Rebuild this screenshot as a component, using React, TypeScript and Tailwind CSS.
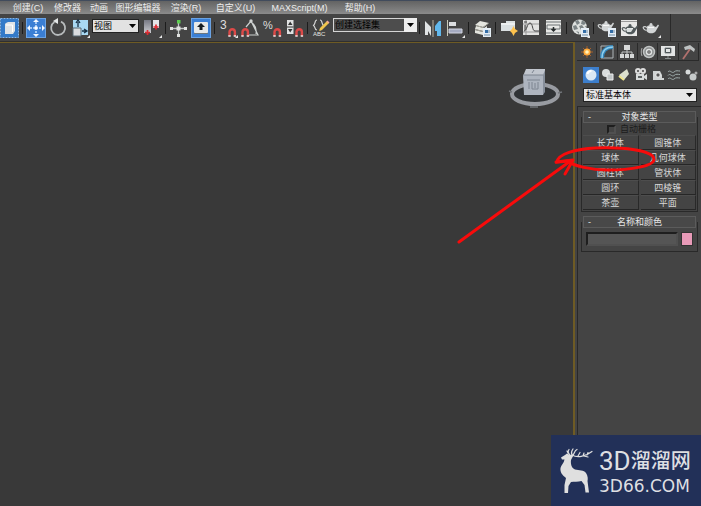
import type { ReactNode } from 'react'

const menus = [
  { label: '创建(C)', width: 'w-10' },
  { label: '修改器', width: 'w-[39px]' },
  { label: '动画', width: 'w-6' },
  { label: '图形编辑器', width: 'w-[54px]' },
  { label: '渲染(R)', width: 'w-[42px]' },
  { label: '自定义(U)', width: 'w-[57px]' },
  { label: 'MAXScript(M)', width: 'w-[71px]' },
  { label: '帮助(H)', width: 'w-[50px]' },
]

const primitives = ['长方体', '圆锥体', '球体', '几何球体', '圆柱体', '管状体', '圆环', '四棱锥', '茶壶', '平面']

function Tool({ label, wide = true, children }: { label: string; wide?: boolean; children: ReactNode }) {
  return (
    <button type="button" aria-label={label} className={wide ? 'w-[22px] shrink-0' : 'w-5 shrink-0'}>
      <svg viewBox={wide ? '0 0 22 24' : '1 0 20 24'} className="block h-6 w-full" fill="none">
        {children}
      </svg>
    </button>
  )
}

function Sep() {
  return (
    <span className="flex w-[5px] shrink-0 justify-center" aria-hidden>
      <span className="h-3 w-px bg-[#1c1c1c]" />
    </span>
  )
}

function Active() {
  return <rect x="1.5" y="2.5" width="19" height="19" fill="#3b7fd4" stroke="#6ba3e4" />
}

function Flyout() {
  return <path d="M21 19v3h-3z" fill="#e8e8e8" />
}

function Magnet({ x = 12, y = 12 }: { x?: number; y?: number }) {
  return (
    <g transform={`translate(${x} ${y})`}>
      <path d="M1.500 8V4a2.700 2.700 0 0 1 5.400 0v4" stroke="#dc4a48" strokeWidth="2.400" />
      <path d="M.3 8h2.400M5.700 8h2.400" stroke="#f1e5e5" strokeWidth="1.600" />
    </g>
  )
}

function Teapot({ x = 0, y = 0, fill = '#d2d5d6' }: { x?: number; y?: number; fill?: string }) {
  return (
    <g transform={`translate(${x} ${y})`}>
      <path d="M5 5.500C7 3.500 11 3.500 12.500 5.500L14 6L16 3.500L17 4.500L13.500 10.500C12 13 6 13 4.500 10Z" fill={fill} />
      <path d="M4.500 9.500C1 8.500 0 5.500 3 5.500L5 6.500" stroke={fill} strokeWidth="1.200" />
      <path d="M7.500 3.500h3M9 2v2" stroke={fill} strokeWidth="1.500" />
      <path d="M6 6.500h6" stroke="#f6f6f6" />
    </g>
  )
}

function Doc() {
  return (
    <g>
      <path d="M12 12h8v9h-8z" fill="#e4edf5" />
      <path d="M14 14h3v3h-3z" fill="#336da6" />
      <path d="M13 19h6M18 14v3" stroke="#718da6" />
    </g>
  )
}

function Caret() {
  return (
    <svg viewBox="0 0 7 4" className="h-1 w-[7px]" aria-hidden>
      <path d="M0 0h7L3.500 4z" fill="#050505" />
    </svg>
  )
}

function Toolbar() {
  return (
    <div className="flex h-7 items-center border-b border-[#303030] bg-[#444444]">
      <Tool label="选择对象" wide={false}>
        <rect x="1.500" y="2.500" width="18" height="19" fill="#337ac9" stroke="#83b6ed" strokeDasharray="2 1" />
        <path d="M7 7l2-1h7v9l-2 3H6V8z" fill="#dfe3e6" />
        <path d="M7 9h6.500v7" stroke="#fff" />
      </Tool>
      <Sep />
      <Tool label="选择并移动">
        <Active />
        <path d="M11 6v12M5 12h12" stroke="#c4e1ff" strokeDasharray="2 1" strokeWidth="1.500" />
        <path d="M11 3L8 6h6zM11 21l-3-3h6zM2 12l3-3v6zM20 12l-3-3v6z" fill="#f3f8ff" />
        <path d="M9.500 10.500h3v3h-3z" fill="#fff" />
      </Tool>
      <Tool label="选择并旋转">
        <path d="M7.500 6A7 7 0 1 0 14 5.600" stroke="#b7bbbc" strokeWidth="1.800" />
        <path d="M6 5l5-3v6z" fill="#e4e7e7" />
      </Tool>
      <Tool label="选择并缩放">
        <path d="M4 4h15v15H4z" fill="#a8d8f2" />
        <path d="M4 12h8v8H4z" fill="#d9dcdf" stroke="#586a75" />
        <path d="M9 11V6M7 7l2-3 2 3M13 15h4M15 13l3 2-3 2" stroke="#173044" strokeWidth="1.300" />
        <Flyout />
      </Tool>
      <label className="relative ml-px mr-0.5 flex w-[47px] shrink-0 self-start pt-[5px]">
        <select aria-label="参考坐标系" className="h-[14px] w-full appearance-none border border-[#222] bg-[#e2e2e2] pl-px text-[9px] leading-3 text-black">
          <option>视图</option>
        </select>
        <span className="pointer-events-none absolute inset-y-0 right-[3px] flex items-center pt-[5px]">
          <Caret />
        </span>
      </label>
      <Tool label="使用轴点中心">
        <path d="M3 4h7v13H3z" fill="url(#pivot)" />
        <path d="M12 4h6v8h-6z" fill="#e6e6e8" />
        <path d="M6.500 14v5M4 16.500h5M15 8.500v5M12.500 11h5" stroke="#e02b31" strokeWidth="1.700" />
        <Flyout />
        <defs>
          <linearGradient id="pivot" x2="0" y2="1">
            <stop stopColor="#777984" />
            <stop offset="1" stopColor="#cacbd0" />
          </linearGradient>
        </defs>
      </Tool>
      <Sep />
      <Tool label="选择并操纵">
        <path d="M10.500 6v13M3 12.500h15" stroke="#c4c8c7" strokeWidth="1.300" />
        <path d="M8.500 10.500h4v4h-4zM2 11h3v3H2zM16 11h3v3h-3zM9 18h3v3H9z" fill="#e0e1df" />
        <path d="M9 4h3.500v3.500H9z" fill="#5ece50" />
      </Tool>
      <Tool label="键盘快捷键覆盖">
        <Active />
        <rect x="4" y="6" width="14" height="11" rx="1" fill="#e7e9e9" />
        <path d="M4 17.500h14" stroke="#6b7780" />
        <path d="M11 7l-4 4h2.500v3h3v-3H15z" fill="#171d22" />
      </Tool>
      <Sep />
      <Tool label="捕捉开关">
        <text x="3" y="13" fontSize="12" fill="#dedede">3</text>
        <Magnet x={11} />
        <Flyout />
      </Tool>
      <Tool label="角度捕捉切换">
        <path d="M7 11L12 5l7 14H9M12 6a12 12 0 0 1 5 12" stroke="#cdd1d0" strokeWidth="1.200" />
        <circle cx="12" cy="5" r="1.700" fill="#d2d5d4" />
        <Magnet x={2} />
      </Tool>
      <Tool label="百分比捕捉切换">
        <text x="2" y="13" fontSize="11" fill="#dedede">%</text>
        <Magnet />
      </Tool>
      <Tool label="微调器捕捉切换">
        <path d="M4 4h6.500v14H4z" fill="#e0e2e2" />
        <path d="M4 11h6.500" stroke="#333" />
        <path d="M5 9h4.500L7.200 5.500zM5 13h4.500l-2.300 3.500z" fill="#353535" />
        <Magnet />
      </Tool>
      <Sep />
      <Tool label="编辑命名选择集">
        <path d="M7 4C4 4 6 9 3 9.500 6 10 4 14 7 14M10 4c3 0 1 5 4 5.500C11 10 13 14 10 14" stroke="#d5d5d5" strokeWidth="1.200" />
        <path d="M10 12l7-7 2 2-7 7-3 1z" fill="#efc44c" />
        <path d="M17 5l2 2" stroke="#f5a49c" strokeWidth="1.500" />
        <text x="3" y="20" fontSize="6" fill="#e5e5e5">ABC</text>
      </Tool>
      <label className="relative ml-px flex w-[84px] shrink-0 self-start pt-1">
        <select aria-label="命名选择集" className="h-[14px] w-full appearance-none border border-[#d5d5d5] bg-[#4d4d4d] pl-px text-[9px] leading-3 text-black">
          <option>创建选择集</option>
        </select>
        <span className="pointer-events-none absolute bottom-0 right-0 flex h-[14px] w-[13px] items-center justify-center bg-[#eeeeee]">
          <Caret />
        </span>
      </label>
      <Sep />
      <Tool label="镜像">
        <path d="M3 5l6 6v9l-3-5v4H3z" fill="#e1e4e5" />
        <path d="M19 5h-2l-4 5v5h2v5h4z" fill="#62b8ec" />
        <path d="M11 4v17" stroke="#b6afa0" />
      </Tool>
      <Tool label="对齐">
        <path d="M3.500 4v16" stroke="#c8c9ba" />
        <path d="M5 6h7v4H5z" fill="#dbdde0" />
        <path d="M5 13h13v4H5z" fill="#a5abc1" stroke="#d2d5e0" />
        <Flyout />
      </Tool>
      <Sep />
      <Tool label="层管理器">
        <path d="M9 5l9 2-6 4-8-2zM5 10l8 2 3-2v2l-4 3-8-2zM4 14l8 2v3l-8-2z" fill="#e4e5df" />
        <path d="M5 9.500l7 2 5-4M4 13.500l8 2" stroke="#aaa99f" />
        <Doc />
      </Tool>
      <Sep />
      <Tool label="切换功能区">
        <path d="M3 7h5V5h9v10H3z" fill="#d9dfe1" />
        <path d="M3 8h14" stroke="#fff" />
        <path d="M15.500 10l1.500 3 3 2-3 2-1.500 3-1.500-3-2-2 2-2z" fill="#ffc34d" />
      </Tool>
      <Tool label="曲线编辑器">
        <path d="M3 4h16v15H3z" fill="#e2e2e1" />
        <path d="M6 4v15M3 8h16M3 16h16" stroke="#999" />
        <path d="M4 15c3 0 3-8 6-8s2 8 5 8h4" stroke="#444" />
        <path d="M4 6h3M5 9v5" stroke="#3b3b3b" />
      </Tool>
      <Tool label="图解视图">
        <path d="M4 4h15v15H4z" fill="#e7e8e6" />
        <path d="M4 6h15M5 9h13v4H5zM4 17h15" stroke="#6b7172" />
        <path d="M11.500 11v4M9.500 13l2 2 2-2" stroke="#252a2b" strokeWidth="1.500" />
      </Tool>
      <Sep />
      <Tool label="材质编辑器">
        <circle cx="10.500" cy="11" r="7.500" fill="#dde0de" />
        <path d="M6 5l3-1 2 3-3 2zM13 4l4 3-2 2-3-1zM4 10l3-1 2 4-4 1zM10 10l3-1 2 3-3 2zM7 15l3 1v2zM16 10h2v3z" fill="#7b8385" />
        <Doc />
        <Flyout />
      </Tool>
      <Sep />
      <Tool label="渲染设置">
        <Teapot x={1} y={3} />
        <Doc />
      </Tool>
      <Tool label="渲染帧窗口">
        <path d="M3 4h16v16H3z" fill="#e8e8e7" />
        <path d="M3 5.500h16" stroke="#999" />
        <Teapot x={3} y={6} fill="#51595b" />
        <path d="M8 13c2-1 5-1 7 0l-2 3H9z" fill="#d8dddd" />
      </Tool>
      <Tool label="渲染产品">
        <Teapot x={2} y={5} />
        <Flyout />
      </Tool>
      <span className="ml-2 h-full w-px bg-[#292929]" aria-hidden />
    </div>
  )
}

function PanelIcon({ label, active, tab, children }: { label: string; active?: boolean; tab?: boolean; children: ReactNode }) {
  return (
    <button
      type="button"
      aria-label={label}
      className={`flex flex-1 items-center justify-center ${tab ? 'h-[18px] border-b border-r border-[#2a2a2a]' : 'h-[17px]'}`}
    >
      <svg viewBox="0 0 16 16" className={active ? 'size-4 bg-[#3d7fcd]' : 'size-4'} fill="none">
        {children}
      </svg>
    </button>
  )
}

function Rollout({ title, children }: { title: string; children: ReactNode }) {
  return (
    <section className="relative mx-[3px] px-0.5 pb-0.5">
      <span className="pointer-events-none absolute inset-x-0 bottom-0 top-[6px] border-x border-b border-[#292929]" aria-hidden />
      <button
        type="button"
        className="relative flex h-3 w-full items-center justify-center border border-[#5b5b5b] bg-[#484848] text-[9px] leading-3 text-[#e6e6e6]"
      >
        <span className="absolute left-1">-</span>
        {title}
      </button>
      {children}
    </section>
  )
}

function CommandPanel() {
  return (
    <aside className="flex w-[126px] shrink-0 flex-col bg-[#444444] pl-0.5">
      <div className="flex pr-0.5 pt-px">
        <PanelIcon tab label="创建">
          <path d="M8 2v12M2 8h12M4 4l8 8M12 4l-8 8" stroke="#a65e29" />
          <circle cx="8" cy="8" r="3.500" fill="#ffab3d" />
          <circle cx="8" cy="8" r="1.800" fill="#fff3bb" />
        </PanelIcon>
        <PanelIcon tab label="修改">
          <path d="M2 2h12v12H2z" stroke="#aeb5b8" />
          <path d="M3 14C3 7 7 3 14 3" stroke="#3484b7" strokeWidth="4" />
          <path d="M3 14C3 7 7 3 14 3" stroke="#8dceee" strokeWidth="1.500" />
        </PanelIcon>
        <PanelIcon tab label="层次">
          <path d="M5 1h6v5H5zM1 10h4v4H1zM6 10h4v4H6zM11 10h4v4h-4z" fill="#d6d8d8" />
          <path d="M8 6v4M3 10V8h10v2" stroke="#c3c6c6" />
        </PanelIcon>
        <PanelIcon tab label="运动">
          <circle cx="9" cy="8" r="5.500" fill="#8b8e8e" stroke="#c1c4c4" strokeWidth="1.500" />
          <circle cx="9" cy="8" r="2.500" fill="#555" stroke="#dfe1e1" strokeWidth="1.500" />
          <path d="M2 4c-1 3-1 5 0 8M8 8h2" stroke="#aaa" />
        </PanelIcon>
        <PanelIcon tab label="显示">
          <path d="M1 2h14v10H1z" fill="#e3e5e5" />
          <path d="M5 4h6v5H5zM8 12v3M5 14.500h6" stroke="#898e8e" />
          <path d="M5.500 4.500h5v4h-5z" stroke="#4e5659" />
        </PanelIcon>
        <PanelIcon tab label="实用程序">
          <path d="M3 15l7-10" stroke="#b1716e" strokeWidth="1.800" />
          <path d="M4 3l6-2 5 4-1 3-4-3-5 1z" fill="#bec2c2" />
        </PanelIcon>
      </div>
      <div className="mt-[5px] flex pl-[6px] pr-0.5">
        <PanelIcon active label="几何体">
          <circle cx="8" cy="8" r="5.500" fill="#d9e7f3" />
          <path d="M4.500 7a4 4 0 0 1 4-3" stroke="#fff" strokeWidth="2" />
        </PanelIcon>
        <PanelIcon label="图形">
          <circle cx="6" cy="6" r="4" fill="#dadddd" />
          <path d="M7 7h6v6H7z" fill="#bfc4c5" stroke="#eee" />
        </PanelIcon>
        <PanelIcon label="灯光">
          <path d="M3 8l8-6 2 5-5 6z" fill="#dde1ce" />
          <path d="M3 9l5 4" stroke="#f0e78c" strokeWidth="2" />
        </PanelIcon>
        <PanelIcon label="摄影机">
          <circle cx="5" cy="4" r="2" stroke="#ddd" strokeWidth="2" />
          <circle cx="10" cy="4" r="2" stroke="#ddd" strokeWidth="2" />
          <path d="M3 7h8v6H3zM11 9l3-2v6l-3-2z" fill="#d7dada" />
          <path d="M5 9h4v2H5z" fill="#5d6262" />
        </PanelIcon>
        <PanelIcon label="辅助对象">
          <path d="M3 11V4h7l2 4v3h2v2H3z" fill="#d0d3d3" />
          <circle cx="8" cy="8" r="2.200" fill="#555" stroke="#eee" />
        </PanelIcon>
        <PanelIcon label="空间扭曲">
          <path d="M2 5c2-3 4 2 6 0s4-1 6-1M2 8.500c2-3 4 2 6 0s4-1 6-1M2 12c2-3 4 2 6 0s4-1 6-1" stroke="#9eabaa" />
        </PanelIcon>
        <PanelIcon label="系统">
          <circle cx="5" cy="5" r="2.500" fill="#d7dada" />
          <circle cx="10" cy="10" r="3.500" fill="#c6caca" />
          <circle cx="13" cy="6" r="1.500" fill="#aaa" />
        </PanelIcon>
      </div>
      <label className="relative ml-[6px] mr-1 mt-[5px] flex">
        <select aria-label="几何体类别" className="h-[14px] w-full appearance-none border border-[#222] bg-[#e5e5e5] pl-0.5 text-[9px] leading-3 text-black">
          <option>标准基本体</option>
        </select>
        <span className="pointer-events-none absolute inset-y-0 right-1 flex items-center">
          <Caret />
        </span>
      </label>

      <div className="mt-1 flex flex-1 flex-col gap-1 border-l border-t border-[#292929] pt-1">
        <Rollout title="对象类型">
          <label className="ml-6 flex h-3 items-center gap-1 text-[9px] leading-3 text-[#1c1c1c]">
            <input type="checkbox" disabled className="size-[9px] appearance-none border-2 border-b-[#505050] border-l-[#1e1e1e] border-r-[#505050] border-t-[#1e1e1e]" />
            自动栅格
          </label>
          <div className="grid grid-cols-2 gap-x-0.5">
            {primitives.map((name) => (
              <button
                key={name}
                type="button"
                className="h-[15px] border-b border-r border-t border-b-[#262626] border-r-[#292929] border-t-[#4d4d4d] text-[9px] leading-3 text-[#d8d8d8]"
              >
                {name}
              </button>
            ))}
          </div>
        </Rollout>
        <Rollout title="名称和颜色">
          <div className="flex gap-[3px] px-[3px] pb-1 pt-1">
            <input aria-label="名称" className="h-[14px] min-w-0 flex-1 border-2 border-b-[#505050] border-l-[#1e1e1e] border-r-[#505050] border-t-[#1e1e1e] bg-[#555555] text-[9px]" />
            <button type="button" aria-label="颜色" className="h-[14px] w-3 border border-[#333] bg-[#e89ab8]" />
          </div>
        </Rollout>
      </div>
    </aside>
  )
}

function ViewCube() {
  return (
    <svg viewBox="0 0 56 44" className="absolute right-[10px] top-[22px] h-11 w-14" fill="none" aria-hidden>
      <ellipse cx="28" cy="29" rx="23" ry="10" fill="#303336" stroke="#989ba1" strokeWidth="4" />
      <path d="M2 26l3 1M51 28l4-1M23 42h8" stroke="#71757a" strokeWidth="1.500" />
      <path d="M19 4h19v5l-2 2H16z" fill="#c1c6ce" />
      <path d="M16 10h20v20H17z" fill="#adb4bf" />
      <path d="M36 10l2-5v22l-2 3z" fill="#868e9a" />
      <path d="M16 10h20M27 5l-2 3" stroke="#7c8490" />
      <path d="M20 15h13M22 17v7M25 17v7h6v-7M28 18v5" stroke="#7c8490" />
    </svg>
  )
}

function Annotation() {
  return (
    <svg viewBox="0 0 210 105" className="pointer-events-none absolute right-[41px] top-[143px] h-[105px] w-[210px]" fill="none" aria-hidden>
      <path d="M9 99L119 19" stroke="#f80b0b" strokeWidth="3" strokeLinecap="round" />
      <path d="M106 19l17-2-8 14" stroke="#f80b0b" strokeWidth="3" strokeLinecap="round" strokeLinejoin="round" />
      <path
        d="M119 18L107 19C108 11 125 6 146 5C172 4 203 7 204 16C205 23 180 27 158 27C141 27 124 23 117 18"
        stroke="#f80b0b"
        strokeWidth="3"
        strokeLinecap="round"
      />
    </svg>
  )
}

function Watermark() {
  return (
    <div className="absolute bottom-0 right-0 flex h-[71px] w-[150px] items-center gap-1.5 bg-[#223058] pl-2 text-[#dedfe2]">
      <svg viewBox="0 0 34 46" className="h-[46px] w-[34px] shrink-0" fill="none" aria-hidden>
        <path
          d="M2 9.500L6 7L8 5.500L11 7L15 6.500L13 10L12 12C11.500 16 12.500 20 16 21.500C20 22.500 25 22 27 25C29 28 29 31 28.500 33L30 44.500H26.500L25.500 37L22.500 33C19 34 15 33.500 12 34L9.500 38L9 45H5.500V37L7 30C3 27 1 24 1.500 20C2 17 5 15 5.500 11.500L3 11.500Z"
          fill="#dfdfdf"
        />
        <path
          d="M11 7C8.500 5 9 3 10 1.500M9 5L8 3M13 7C11.500 4 13 2.500 14 1M14 7C16 5 15 3 18 1.500M13 7C18 10 26 9 33 3.500M19 8L21 4.500M24 8L25 5M28 7L29 4.500M25 8L29 9"
          stroke="#dfdfdf"
          strokeWidth="1.200"
          strokeLinecap="round"
        />
      </svg>
      <div>
        <div className="flex items-center leading-[30px]">
          <span className="font-[Roboto,sans-serif] text-[26px]">3D</span>
          <span className="text-[20px] font-medium">溜溜网</span>
        </div>
        <div className="font-['DejaVu_Sans',sans-serif] text-[17px] leading-5">3D66.COM</div>
      </div>
    </div>
  )
}

function App() {
  return (
    <div className="relative flex min-h-dvh flex-col bg-[#444444] font-['Liberation_Sans','Noto_Sans_CJK_SC',sans-serif] text-[#dddddd]">
      <nav className="flex h-[14px] items-center border-t border-[#414b5c] bg-linear-to-b from-[#636363] to-[#8b8b8b] pl-2 text-[9px] leading-3 text-[#eeeeee]">
        {menus.map((menu) => (
          <button key={menu.label} type="button" className={`${menu.width} shrink-0 whitespace-nowrap`}>
            {menu.label}
          </button>
        ))}
      </nav>
      <Toolbar />
      <div className="flex flex-1">
        <main className="relative flex-1 border-r-2 border-t border-[#6e5b24] bg-[#393939]">
          <ViewCube />
        </main>
        <CommandPanel />
      </div>
      <Annotation />
      <Watermark />
    </div>
  )
}

export default App
